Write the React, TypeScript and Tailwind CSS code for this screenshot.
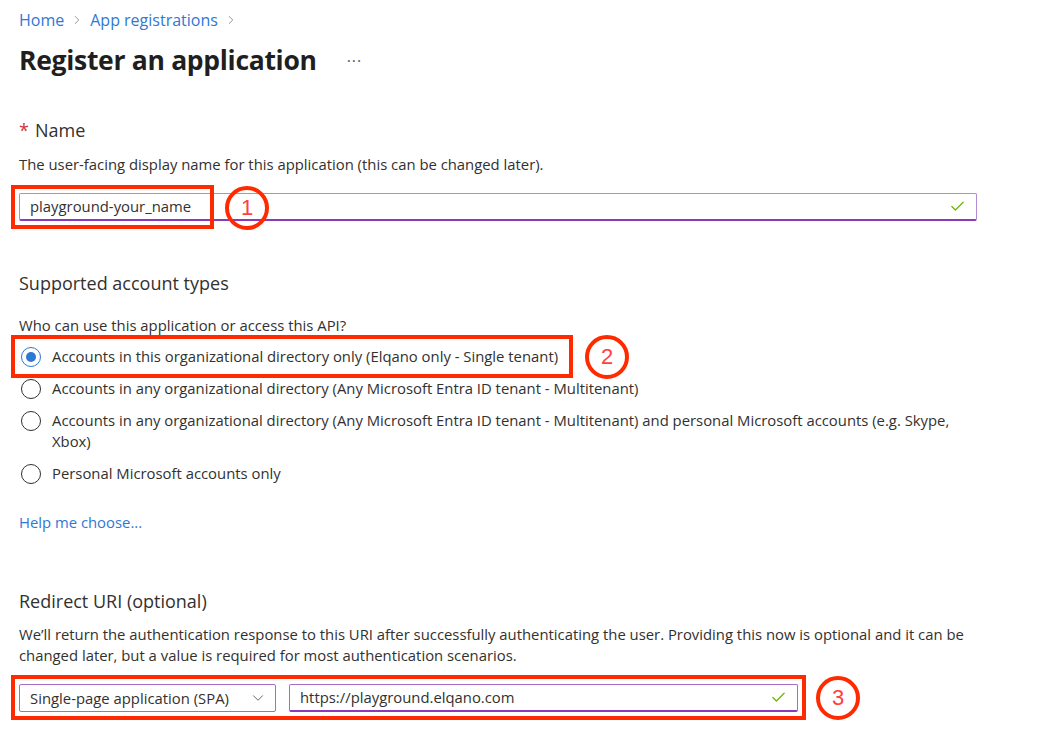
import React from 'react';
import { Check, ChevronDown, ChevronRight } from 'lucide-react';

const font = { fontFamily: '"Open Sans", "Noto Sans", sans-serif' };

function Marker({ n, className }: { n: number; className: string }) {
  return (
    <div
      className={`absolute w-[44px] h-[44px] rounded-full border-[4px] border-[#ff2a00] flex items-center justify-center text-[22px] leading-none text-[#ff4040] bg-transparent ${className}`}
      style={{ fontFamily: '"Liberation Sans", Arial, sans-serif' }}
    >
      {n}
    </div>
  );
}

function Radio({ checked, children }: { checked?: boolean; children: React.ReactNode }) {
  return (
    <div className="flex items-start gap-[11px] pl-[2px]">
      <div
        className={`mt-[0.5px] w-[20px] h-[20px] shrink-0 rounded-full border flex items-center justify-center ${
          checked ? 'border-[#2f78d4]' : 'border-[#323130]'
        }`}
      >
        {checked && <div className="w-[10px] h-[10px] rounded-full bg-[#2f78d4]" />}
      </div>
      <div className="text-[14.85px] leading-[21px] text-[#323130]">{children}</div>
    </div>
  );
}

export default function App() {
  return (
    <div className="w-[1064px] h-[729px] bg-white overflow-hidden px-[19px] pt-[10px] text-[#323130]" style={font}>
      {/* Breadcrumb */}
      <nav className="flex items-center h-[20px] text-[16px] text-[#2f78d4]">
        <span>Home</span>
        <ChevronRight className="w-[14px] h-[14px] mx-[6px] text-[#8a8886]" strokeWidth={1.5} />
        <span>App registrations</span>
        <ChevronRight className="w-[14px] h-[14px] mx-[6px] text-[#8a8886]" strokeWidth={1.5} />
      </nav>

      {/* Title */}
      <div className="mt-[13px] h-[36px] flex items-center">
        <h1 className="text-[26.5px] font-bold tracking-[-0.3px] text-[#1f1f1f]">Register an application</h1>
        <span className="ml-[30px] text-[16px] text-[#605e5c] tracking-[1px]">···</span>
      </div>

      {/* Name */}
      <div className="mt-[39px] h-[24px] flex items-center text-[18px]">
        <span className="text-[#d13438] mr-[6px]">*</span>
        <span>Name</span>
      </div>
      <p className="mt-[12px] h-[20px] text-[14.85px] leading-[20px]">
        The user-facing display name for this application (this can be changed later).
      </p>
      <div className="relative mt-[19px] w-[958px]">
        <div className="h-[28px] flex items-center justify-between border border-[#b48ad0] border-b-[2px] border-b-[#8b3ab9] rounded-[2px] px-[10px] text-[14.85px]">
          <span>playground-your_name</span>
          <Check className="w-[17px] h-[17px] text-[#6bb700]" strokeWidth={1.75} />
        </div>
        <div className="absolute left-[-8px] top-[-8px] w-[203px] h-[44px] border-[4px] border-[#ff2a00]" />
        <Marker n={1} className="left-[206px] top-[-7px]" />
      </div>

      {/* Supported account types */}
      <h2 className="mt-[50px] h-[24px] text-[18px] leading-[24px]">Supported account types</h2>
      <p className="mt-[20px] h-[20px] text-[14.85px] leading-[20px]">Who can use this application or access this API?</p>
      <div className="relative mt-[11px] flex flex-col gap-[11px]">
        <Radio checked>Accounts in this organizational directory only (Elqano only - Single tenant)</Radio>
        <Radio>Accounts in any organizational directory (Any Microsoft Entra ID tenant - Multitenant)</Radio>
        <Radio>
          Accounts in any organizational directory (Any Microsoft Entra ID tenant - Multitenant) and personal Microsoft accounts (e.g. Skype,
          <br />
          Xbox)
        </Radio>
        <Radio>Personal Microsoft accounts only</Radio>
        <div className="absolute left-[-8px] top-[-11px] w-[562px] h-[43px] border-[4px] border-[#ff2a00]" />
        <Marker n={2} className="left-[566px] top-[-11px]" />
      </div>

      <p className="mt-[28px] h-[20px] text-[14.85px] leading-[20px] text-[#2f78d4]">Help me choose...</p>

      {/* Redirect URI */}
      <h2 className="mt-[57px] h-[24px] text-[18px] leading-[24px]">Redirect URI (optional)</h2>
      <p className="mt-[11px] text-[14.85px] leading-[21px]">
        We’ll return the authentication response to this URI after successfully authenticating the user. Providing this now is optional and it can be
        <br />
        changed later, but a value is required for most authentication scenarios.
      </p>
      <div className="relative mt-[18px] flex gap-[13px]">
        <div className="w-[257px] h-[28px] flex items-center justify-between border border-[#a56dc6] rounded-[2px] pl-[10px] pr-[8px] text-[14.85px]">
          <span>Single-page application (SPA)</span>
          <ChevronDown className="w-[18px] h-[18px] text-[#605e5c]" strokeWidth={1.25} />
        </div>
        <div className="w-[509px] h-[28px] flex items-center justify-between border border-[#a56dc6] border-b-[2px] border-b-[#8b3ab9] rounded-[2px] px-[10px] text-[14.85px]">
          <span>https://playground.elqano.com</span>
          <Check className="w-[17px] h-[17px] text-[#6bb700]" strokeWidth={1.75} />
        </div>
        <div className="absolute left-[-8px] top-[-9px] w-[795px] h-[45px] border-[4px] border-[#ff2a00]" />
        <Marker n={3} className="left-[797px] top-[-8px]" />
      </div>
    </div>
  );
}
